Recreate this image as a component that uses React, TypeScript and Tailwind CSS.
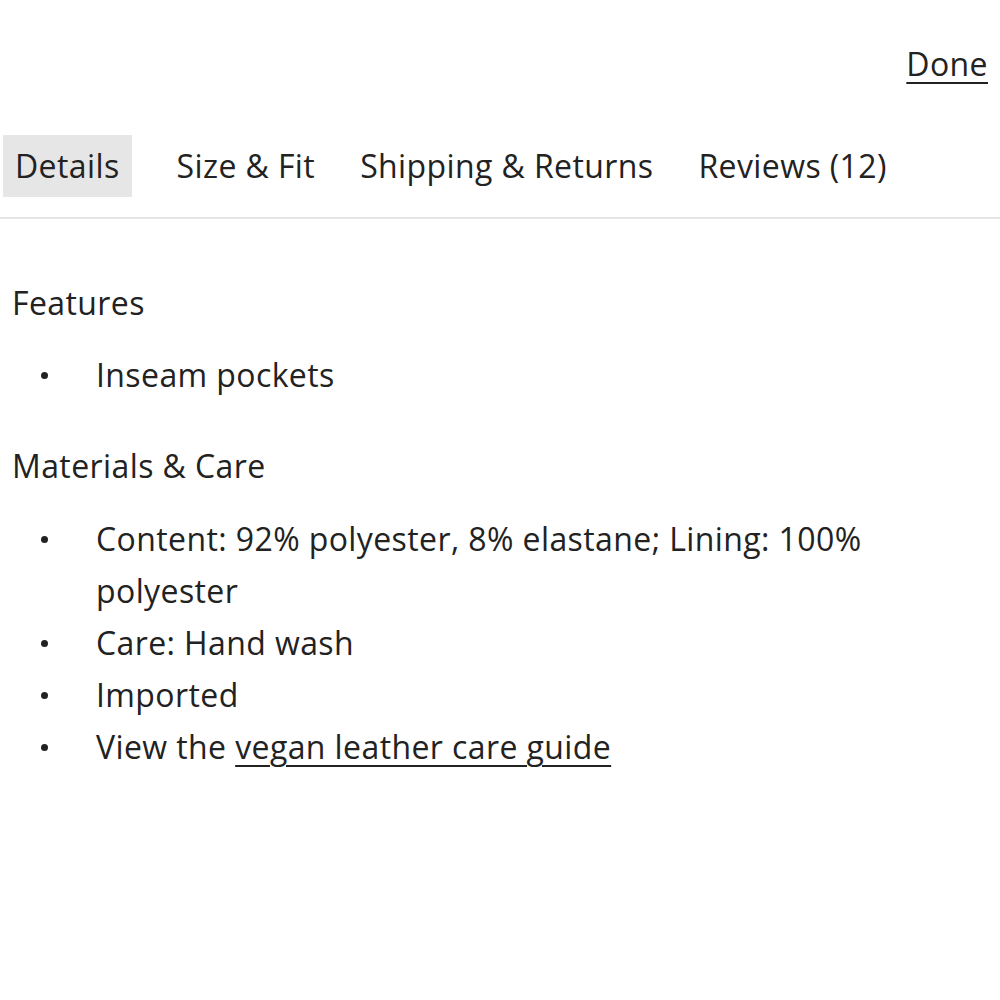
import React from 'react';

const TABS = ['Details', 'Size & Fit', 'Shipping & Returns', 'Reviews (12)'];

const FEATURES = ['Inseam pockets'];

function Bullet({ children }: { children: React.ReactNode }) {
  return (
    <li className="flex">
      <span className="w-[84px] flex-shrink-0 flex h-[52px] items-center pl-[29px]">
        <span className="block w-[7px] h-[7px] rounded-full bg-[#222]" />
      </span>
      <span className="flex-1">{children}</span>
    </li>
  );
}

export default function App() {
  const active = 0;

  return (
    <div
      className="w-[1000px] h-[1000px] bg-white text-[#222] overflow-hidden tracking-[0.4px]"
      style={{ fontFamily: '"Open Sans", "Liberation Sans", sans-serif' }}
    >
      {/* Close button */}
      <div className="flex justify-end pr-[12px] pt-[44px] h-[135px]">
        <button className="text-[32px] leading-[40px] underline underline-offset-[6px] decoration-2 h-[40px]">
          Done
        </button>
      </div>

      {/* Tabs */}
      <div className="border-b-2 border-[#e5e5e5] pb-[20px] pl-[3px]">
        <div className="flex items-center gap-[45px] text-[32px]">
          {TABS.map((t, i) => (
            <button
              key={t}
              className={`h-[62px] ${i === active ? 'bg-[#e6e6e6] px-[12px]' : ''}`}
            >
              {t}
            </button>
          ))}
        </div>
      </div>

      {/* Details panel */}
      <div className="pl-[12px] pt-[64px] text-[32px] leading-[52px]">
        <h3 className="leading-[40px]">Features</h3>
        <ul className="mt-[26px]">
          {FEATURES.map(f => (
            <Bullet key={f}>{f}</Bullet>
          ))}
        </ul>

        <h3 className="mt-[45px] leading-[40px]">Materials &amp; Care</h3>
        <ul className="mt-[27px] w-[880px]">
          <Bullet>Content: 92% polyester, 8% elastane; Lining: 100% polyester</Bullet>
          <Bullet>Care: Hand wash</Bullet>
          <Bullet>Imported</Bullet>
          <Bullet>
            View the{' '}
            <a href="#" className="underline underline-offset-[6px] decoration-2">
              vegan leather care guide
            </a>
          </Bullet>
        </ul>
      </div>
    </div>
  );
}
